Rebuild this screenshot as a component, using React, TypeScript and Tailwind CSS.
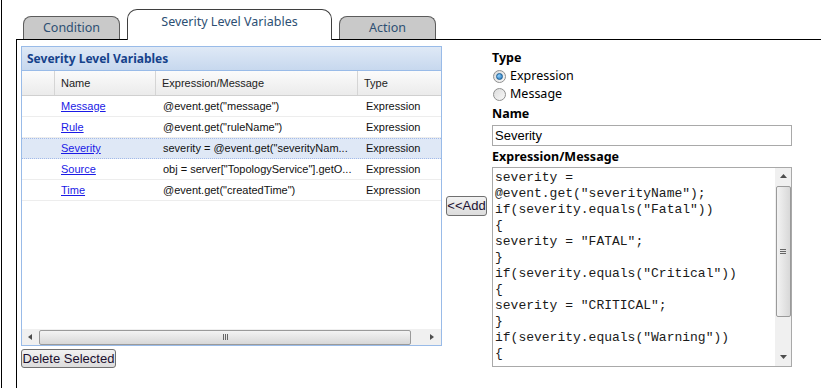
import React from "react";

type Row = { name: string; expr: string; type: string; selected?: boolean };

const rows: Row[] = [
  { name: "Message", expr: '@event.get("message")', type: "Expression" },
  { name: "Rule", expr: '@event.get("ruleName")', type: "Expression" },
  { name: "Severity", expr: 'severity = @event.get("severityNam...', type: "Expression", selected: true },
  { name: "Source", expr: 'obj = server["TopologyService"].getO...', type: "Expression" },
  { name: "Time", expr: '@event.get("createdTime")', type: "Expression" },
];

const code = [
  "severity =",
  '@event.get("severityName");',
  'if(severity.equals("Fatal"))',
  "{",
  'severity = "FATAL";',
  "}",
  'if(severity.equals("Critical"))',
  "{",
  'severity = "CRITICAL";',
  "}",
  'if(severity.equals("Warning"))',
  "{",
];

const uiFont = "font-['Noto_Sans','DejaVu_Sans',sans-serif]";
const arial = "font-['Liberation_Sans',Arial,sans-serif]";

function Tab({ label, active }: { label: string; active?: boolean }) {
  if (active) {
    return (
      <div className="relative z-10 -mb-px flex h-[31px] w-[205px] justify-center rounded-t-[10px] border border-b-0 border-[#3f3f3f] bg-white pt-[3px] text-[12.5px] text-[#2d4f73]">
        {label}
      </div>
    );
  }
  return (
    <div className="flex h-[23px] w-[97px] justify-center rounded-t-[8px] border border-b-0 border-[#5c5c5c] bg-[#c9c9c9] pt-[2px] text-[12.5px] text-[#2d4f73]">
      {label}
    </div>
  );
}

function Radio({ checked, label }: { checked?: boolean; label: string }) {
  return (
    <div className="flex h-[18px] items-center gap-[4px]">
      <span className="ml-[1px] flex h-[13px] w-[13px] items-center justify-center rounded-full border border-[#8e8f8f] bg-gradient-to-br from-[#dcdcdc] to-[#f8f8f8]">
        {checked && (
          <span className="h-[7px] w-[7px] rounded-full border border-[#1c5f95] bg-[radial-gradient(circle_at_35%_35%,#8fd0ff,#1f6fb3)]" />
        )}
      </span>
      <span className="text-[12.5px] text-black">{label}</span>
    </div>
  );
}

function Arrow({ dir }: { dir: "left" | "right" | "up" | "down" }) {
  const d =
    dir === "left"
      ? "M5 1 L1 4 L5 7 Z"
      : dir === "right"
      ? "M1 1 L5 4 L1 7 Z"
      : dir === "up"
      ? "M0 5 L3.5 1 L7 5 Z"
      : "M0 1 L3.5 5 L7 1 Z";
  return (
    <svg width="7" height="8" viewBox="0 0 7 8">
      <path d={d} fill="#4d4d4d" />
    </svg>
  );
}

function Grip({ vertical }: { vertical?: boolean }) {
  const bar = vertical ? "h-px w-[6px] bg-[#666]" : "h-[6px] w-px bg-[#666]";
  return (
    <div className={`flex gap-[1px] ${vertical ? "flex-col" : "flex-row"}`}>
      <div className={bar} />
      <div className={bar} />
      <div className={bar} />
    </div>
  );
}

function Grid() {
  return (
    <div className={`flex h-[300px] w-[421px] flex-col border border-[#99bbe8] bg-white ${arial}`}>
      <div className={`flex h-[24px] items-center border-b border-[#99bbe8] bg-gradient-to-b from-[#dfe9f6] to-[#c7d8ee] pl-[5px] text-[12px] font-bold text-[#15428b] ${uiFont}`}>
        Severity Level Variables
      </div>
      <div className="flex h-[25px] border-b border-[#d0d0d0] bg-gradient-to-b from-[#fbfbfb] to-[#ebebeb] text-[11px] text-[#222]">
        <div className="w-[33px] border-r border-[#d5d5d5]" />
        <div className="flex w-[101px] items-center border-r border-[#d5d5d5] pl-[6px]">Name</div>
        <div className="flex w-[202px] items-center border-r border-[#d5d5d5] pl-[6px]">Expression/Message</div>
        <div className="flex flex-1 items-center pl-[6px]">Type</div>
      </div>
      <div className="flex-1">
        {rows.map((r) => (
          <div
            key={r.name}
            className={`flex h-[21px] items-center text-[11px] text-[#111] ${
              r.selected
                ? "border-y border-dotted border-[#a3bae9] bg-[#dfe8f6]"
                : "border-b border-[#ededed]"
            }`}
          >
            <div className="w-[34px]" />
            <div className="w-[101px] pl-[5px]">
              <span className="text-[#1a1ae6] underline">{r.name}</span>
            </div>
            <div className="w-[202px] truncate pl-[6px]">{r.expr}</div>
            <div className="flex-1 pl-[7px]">{r.type}</div>
          </div>
        ))}
      </div>
      <div className="flex h-[16px] items-center bg-[#f0f0f0]">
        <div className="flex w-[17px] justify-center">
          <Arrow dir="left" />
        </div>
        <div className="flex h-[15px] w-[372px] items-center justify-center rounded-[2px] border border-[#9a9a9a] bg-gradient-to-b from-[#f3f3f3] to-[#d8d8d8]">
          <Grip />
        </div>
        <div className="flex flex-1 justify-end pr-[5px]">
          <Arrow dir="right" />
        </div>
      </div>
    </div>
  );
}

export default function App() {
  return (
    <div className={`h-[388px] w-[821px] overflow-hidden bg-white ${uiFont}`}>
      <div className="ml-[1px] h-full border-l border-black pl-[14px]">
        <div className="flex h-[39px] items-end gap-[7px] pl-[7px]">
          <Tab label="Condition" />
          <Tab label="Severity Level Variables" active />
          <Tab label="Action" />
        </div>
        <div className="flex h-[349px] border-l border-t border-black pl-[4px] pt-[6px]">
          <div className="flex flex-col">
            <Grid />
            <button
              className={`mt-[3px] h-[19px] w-[95px] rounded-[3px] border border-[#707070] bg-gradient-to-b from-[#f2f2f2] to-[#dcdcdc] text-[13px] leading-none text-[#1b1030] ${arial}`}
            >
              Delete Selected
            </button>
          </div>
          <div className="ml-[4px] pt-[146px]">
            <button
              className={`h-[20px] w-[41px] rounded-[3px] border border-[#707070] bg-gradient-to-b from-[#f2f2f2] to-[#dcdcdc] text-[13px] leading-none text-[#1b1030] ${arial}`}
            >
              &lt;&lt;Add
            </button>
          </div>
          <div className="ml-[5px] flex w-[300px] flex-col pt-[2px]">
            <div className="h-[19px] text-[12.5px] font-bold leading-[19px] text-black">Type</div>
            <Radio checked label="Expression" />
            <Radio label="Message" />
            <div className="h-[22px] text-[12.5px] font-bold leading-[22px] text-black">Name</div>
            <div className={`flex h-[21px] items-center border border-[#a9a9a9] pl-[2px] text-[13px] text-black ${arial}`}>
              Severity
            </div>
            <div className="h-[21px] text-[12.5px] font-bold leading-[21px] text-black">
              Expression/Message
            </div>
            <div className="flex h-[200px] border border-[#a9a9a9]">
              <div className="flex-1 overflow-hidden pl-[2px] pt-[2px] font-['Liberation_Mono','Courier_New',monospace] text-[13px] leading-[16px] whitespace-pre text-[#1a1a1a]">
                {code.map((l, i) => (
                  <div key={i}>{l}</div>
                ))}
              </div>
              <div className="flex w-[16px] flex-col items-center bg-[#f0f0f0]">
                <div className="flex h-[18px] items-center">
                  <Arrow dir="up" />
                </div>
                <div className="flex h-[131px] w-[15px] items-center justify-center rounded-[2px] border border-[#9a9a9a] bg-gradient-to-r from-[#f3f3f3] to-[#d8d8d8]">
                  <Grip vertical />
                </div>
                <div className="flex-1" />
                <div className="flex h-[17px] items-center">
                  <Arrow dir="down" />
                </div>
              </div>
            </div>
          </div>
        </div>
      </div>
    </div>
  );
}
